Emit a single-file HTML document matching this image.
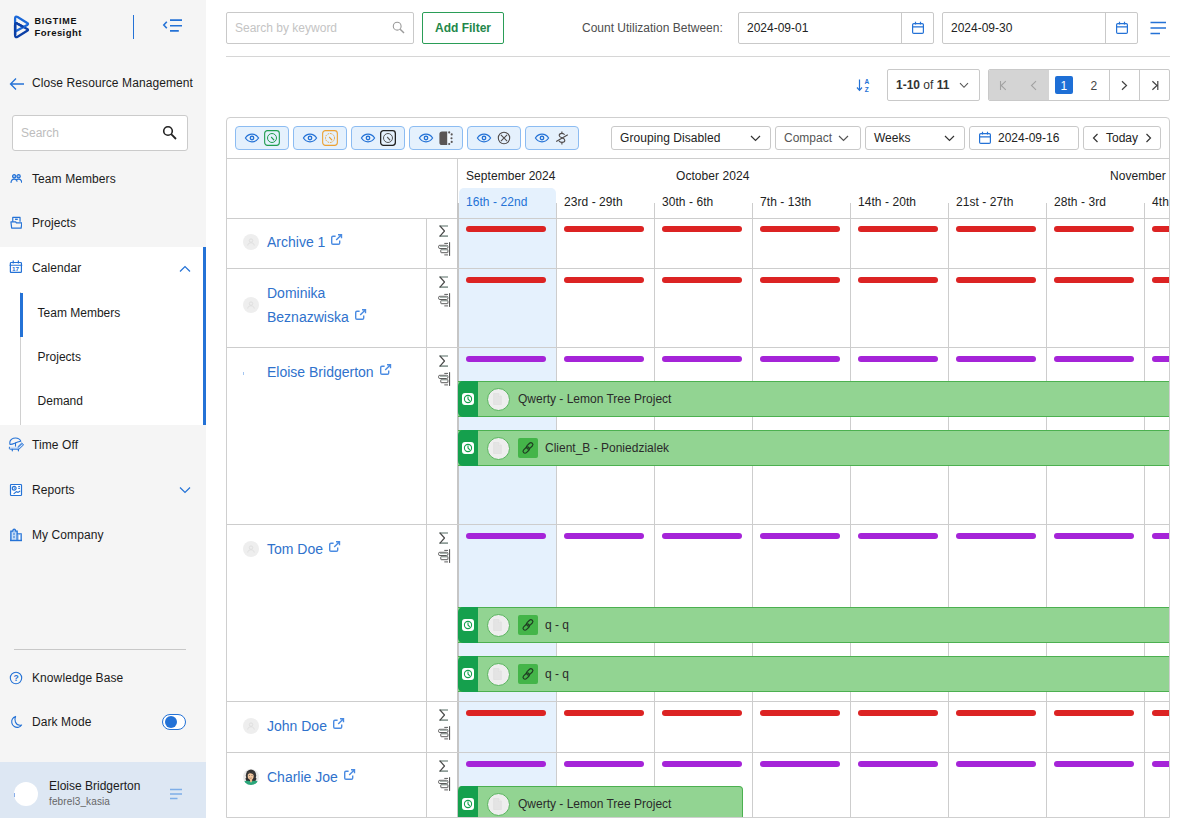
<!DOCTYPE html>
<html>
<head>
<meta charset="utf-8">
<style>
*{box-sizing:border-box;margin:0;padding:0}
html,body{width:1185px;height:818px;overflow:hidden;background:#fff;font-family:"Liberation Sans",sans-serif;font-size:12px;color:#212121}
.abs{position:absolute}
#side{position:absolute;left:0;top:0;width:206px;height:818px;background:#f5f5f5}
.nav{position:absolute;left:0;width:206px;height:44px}
.nav .t{position:absolute;left:32px;top:0;line-height:44px;font-size:12px;letter-spacing:.09px;color:#1b1b1b;white-space:nowrap}
.nav svg{position:absolute}
.sub .t{left:37.6px;letter-spacing:0}
#main{position:absolute;left:206px;top:0;width:979px;height:818px;background:#fff}
.inp{position:absolute;border:1px solid #c9c9c9;border-radius:2px;background:#fff;height:32px}
.txt{position:absolute;white-space:nowrap;line-height:14px}
/* scheduler */
#sch{position:absolute;left:226px;top:117px;width:944px;height:701px;border:1px solid #cfcfcf;border-radius:4px 4px 0 0;background:#fff;overflow:hidden}
.vl{position:absolute;width:1px;background:#cdcdcd}
.hl{position:absolute;height:1px;background:#cdcdcd}
.bar{position:absolute;height:6px;border-radius:3px;width:80px}
.red{background:#dc2323}
.pur{background:#a524d8}
.task{position:absolute;height:36px;background:#92d492;border:1px solid #4cb050;border-left:none;border-right:none}
.task .strip{position:absolute;left:0;top:-1px;width:20px;height:36px;background:#15a04d;border-radius:5px 0 0 5px}
.task .circ{position:absolute;left:28.5px;top:5.5px;width:23px;height:23px;border-radius:50%;background:#eeeeee;border:1.6px solid #58b45d}
.task .lbl{position:absolute;top:0;line-height:35px;font-size:12px;color:#2a2a2a;white-space:nowrap}
.tg{position:absolute;top:8px;width:54px;height:24px;border:1px solid #8cbcf2;border-radius:4px;background:#e5f1fd}
.dd{position:absolute;top:8px;height:24px;border:1px solid #c9c9c9;border-radius:3px;background:#fff}
.dd .t{position:absolute;left:8px;top:0;line-height:22px;font-size:12px;white-space:nowrap;color:#222}
.nm{position:absolute;left:40px;font-size:14px;color:#2f72cc;white-space:nowrap;line-height:24px}
.av{position:absolute;left:16px;width:16px;height:16px;border-radius:50%;background:#eeeeee}
.wk{position:absolute;top:35px;line-height:14px;font-size:12px;color:#222;white-space:nowrap}
.mo{position:absolute;top:9px;line-height:14px;font-size:12px;letter-spacing:.06px;color:#222;white-space:nowrap}
</style>
</head>
<body>
<div id="side">
  <!-- logo -->
  <svg class="abs" style="left:13px;top:14px" width="18" height="26" viewBox="0 0 18 26"><g fill="none" stroke-width="2.3" stroke-linejoin="round" stroke-linecap="round">
<path d="M2.1 11.2Q2.1 8.2 4.6 9.7L14.2 15Q15.8 15.9 14.2 16.8L4.6 22.7Q2.1 24 2.1 21.2Z" stroke="#0b3fa6"/>
<path d="M2.1 16.5V4.5Q2.1 1.6 4.6 3.1L14.2 9Q15.8 9.9 14.2 10.9L3.2 17" stroke="#1b68d8"/>
<path d="M2.1 21V11.2Q2.1 8.2 4.6 9.7L9.6 12.5" stroke="#0b3fa6"/>
</g></svg>
  <div class="txt" style="left:34.5px;top:15px;font-size:9px;font-weight:bold;letter-spacing:.77px;color:#111;line-height:12px">BIGTIME</div>
  <div class="txt" style="left:34.5px;top:27px;font-size:9.5px;font-weight:bold;letter-spacing:.45px;color:#111;line-height:12px">Foresight</div>
  <div class="abs" style="left:133px;top:15px;width:1px;height:24px;background:#2472d6"></div>
  <svg class="abs" style="left:162px;top:17px" width="21" height="16" viewBox="0 0 21 16"><path d="M8 3.1H20M8 8.75H20M8 13.9H16.8" stroke="#2472d6" stroke-width="1.6" fill="none"/><path d="M4.8 4.8L1.8 8L4.8 11.2" stroke="#2472d6" stroke-width="1.6" fill="none"/></svg>

  <!-- close resource mgmt -->
  <svg class="abs" style="left:9px;top:77px" width="16" height="14" viewBox="0 0 16 14"><path d="M15 7H2M7 1.5L1.5 7L7 12.5" stroke="#2472d6" stroke-width="1.3" fill="none"/></svg>
  <div class="txt" style="left:32px;top:76px;font-size:12px;letter-spacing:.09px;color:#1b1b1b">Close Resource Management</div>

  <!-- search -->
  <div class="abs" style="left:12px;top:115px;width:176px;height:36px;border:1px solid #cbcbcb;border-radius:3px;background:#fff"></div>
  <div class="txt" style="left:21px;top:126px;font-size:12px;color:#bdbdbd">Search</div>
  <svg class="abs" style="left:162px;top:125px" width="16" height="16" viewBox="0 0 16 16"><circle cx="6" cy="6" r="4.3" stroke="#222" stroke-width="1.6" fill="none"/><path d="M9.2 9.2L14 14" stroke="#222" stroke-width="1.8"/></svg>

  <div class="nav" style="top:157px"><svg style="left:9.6px;top:16.4px" width="12.8" height="11" viewBox="0 0 14 12"><g fill="none" stroke="#2472d6" stroke-width="1.3"><circle cx="4.6" cy="3.6" r="1.8" fill="#a9c8f0"/><circle cx="9.4" cy="3.6" r="1.8" fill="#a9c8f0"/><path d="M1 10.8C1.4 7.6 3 6.6 4.6 6.6S7.4 7.4 7.9 9.4M6.4 7.4C7.3 6.8 8.3 6.6 9.4 6.6C11 6.6 12.6 7.6 13 10.8"/></g></svg><div class="t">Team Members</div></div>
  <div class="nav" style="top:201px"><svg style="left:9.6px;top:14.8px" width="12.8" height="13.7" viewBox="0 0 14 15"><g fill="none" stroke="#2472d6" stroke-width="1.3" stroke-linejoin="round"><path d="M3 6.2V1.6H11V6.2"/><path d="M5.5 3.6H8.5" stroke-width="1.5"/><path d="M1 6.4H6.2L7 7.6H13L12.2 13.2H1.8Z"/></g></svg><div class="t">Projects</div></div>
  <div class="abs" style="left:0;top:247px;width:206px;height:178px;background:#fff;border-right:3px solid #2472d6"></div>
  <div class="nav" style="top:246px"><svg style="left:9.4px;top:14.4px" width="13.8" height="14" viewBox="0 0 15 15"><g fill="none" stroke="#2472d6" stroke-width="1.3"><rect x="1.5" y="2.6" width="12" height="10.8" rx="0.8" fill="#fff"/><path d="M0.6 5.6H14.4M4.6 0.4V3.8M10.2 0.4V3.8"/></g><text x="3.2" y="11.8" font-family="Liberation Sans" font-size="6.8" font-weight="bold" fill="#2472d6">17</text></svg><div class="t">Calendar</div><svg style="left:179px;top:19px" width="12" height="8" viewBox="0 0 12 8"><path d="M1 6.5L6 1.5L11 6.5" fill="none" stroke="#2472d6" stroke-width="1.2"/></svg></div>
  <div class="abs" style="left:20px;top:292px;width:1px;height:133px;background:#d0d0d0"></div>
  <div class="abs" style="left:20px;top:293px;width:3px;height:44px;background:#2472d6"></div>
  <div class="nav sub" style="top:291px"><div class="t">Team Members</div></div>
  <div class="nav sub" style="top:335px"><div class="t">Projects</div></div>
  <div class="nav sub" style="top:379px"><div class="t">Demand</div></div>
  <div class="nav" style="top:423px"><svg style="left:8px;top:14px" width="17" height="15" viewBox="0 0 17 15"><g fill="none" stroke="#2472d6" stroke-width="1.1" stroke-linecap="round" stroke-linejoin="round"><path d="M2 7.4C1.2 4.4 3 1.8 5.4 1.2C8.8 0.6 11.8 1.8 12.8 4.2C10.8 4.4 8.8 5 6.6 6.2C5 7 3.4 7.5 2 7.4Z"/><path d="M7.5 6V9.2"/><path d="M1.5 9.8H9.9L13.6 6.1L15.6 7.8L11 12.2H1.5Z" fill="#cfe1f8" stroke="none"/><path d="M1.4 10.2V11.6Q1.4 12.2 2.2 12.2H11L15.6 7.8L13.6 6.1L9.9 9.8" stroke-width="1"/><path d="M10.4 10.2L14 6.8" stroke-width="0.8"/><path d="M4.3 12.4V13.8M10.4 12.4V13.8" stroke-width="1.2"/></g></svg><div class="t">Time Off</div></div>
  <div class="nav" style="top:468px"><svg style="left:9px;top:15px" width="14" height="14" viewBox="0 0 14 14"><g fill="none" stroke="#2472d6" stroke-width="1.2"><rect x="1.5" y="1.5" width="11" height="11" rx="0.8" fill="#fff"/><circle cx="5.2" cy="5.2" r="1.9"/><path d="M5.2 4.2V5.4L6 6" stroke-width="0.8"/><path d="M9.2 3.6H11M9.2 5.4H11" stroke-width="1"/><path d="M5 10.6L7.4 8.6L9 9.4L10.8 8.2" stroke-linecap="round"/></g></svg><div class="t">Reports</div><svg style="left:179px;top:18.3px" width="12" height="8" viewBox="0 0 12 8"><path d="M1 1.5L6 6.5L11 1.5" fill="none" stroke="#2472d6" stroke-width="1.2"/></svg></div>
  <div class="nav" style="top:513px"><svg style="left:9px;top:14px" width="14" height="15" viewBox="0 0 14 15"><g fill="none" stroke="#2472d6" stroke-width="1.2"><path d="M1.8 13.4V4.2H3.6Q4 2.2 5.2 2.2T6.8 4.2H8.2V13.4" fill="#9fc4f0"/><path d="M3.9 5.5V13M6.1 5.5V13" stroke="#e8f1fc" stroke-width="1"/><path d="M8.2 6.8H12.2V13.4" /><path d="M10.3 8.5V12.8" stroke="#fff" stroke-width="1.2"/><path d="M9.2 7.4V13M11.5 7.4V13" stroke="#8fb9ee" stroke-width="0.9"/><path d="M4.4 7H5.6M4.4 10H5.6" stroke-width="1.3"/><path d="M1 13.5H13" stroke-width="1.4"/></g></svg><div class="t">My Company</div></div>

  <div class="abs" style="left:14px;top:649px;width:172px;height:1px;background:#c8c8c8"></div>
  <div class="nav" style="top:656px"><svg style="left:9px;top:15px" width="14" height="14" viewBox="0 0 14 14"><circle cx="7" cy="7" r="5.7" fill="none" stroke="#2472d6" stroke-width="1.1"/><text x="4.4" y="10" font-family="Liberation Sans" font-size="8.5" font-weight="bold" fill="#2472d6">?</text></svg><div class="t">Knowledge Base</div></div>
  <div class="nav" style="top:700px"><svg style="left:10px;top:15px" width="13" height="14" viewBox="0 0 13 14"><path d="M5.6 1.4C2.8 2.4 1.4 5 1.8 7.8C2.4 11 5.6 13 8.6 12.2C10 11.8 11 11 11.6 10C9 10.6 6.4 9.4 5.4 7C4.6 5 4.8 3 5.6 1.4Z" fill="none" stroke="#2472d6" stroke-width="1.1" stroke-linejoin="round"/></svg><div class="t">Dark Mode</div></div>
  <div class="abs" style="left:162px;top:714px;width:24px;height:16px;border:1px solid #2472d6;border-radius:8px;background:#fff"><div class="abs" style="left:2px;top:1px;width:12px;height:12px;border-radius:50%;background:#2472d6"></div></div>

  <div class="abs" style="left:0;top:762px;width:206px;height:56px;background:#dde7f3"></div>
  <div class="abs" style="left:14px;top:782px;width:24px;height:24px;border-radius:50%;background:#fff"></div><div class="abs" style="left:14px;top:793px;width:1px;height:4px;background:#6d9be6;opacity:.8"></div>
  <div class="txt" style="left:49px;top:779px;font-size:12px;color:#1b1b1b">Eloise Bridgerton</div>
  <div class="txt" style="left:49px;top:796px;font-size:10px;letter-spacing:.12px;color:#666;line-height:12px">febrel3_kasia</div>
  <svg class="abs" style="left:169px;top:788px" width="14" height="12" viewBox="0 0 14 12"><path d="M1 1.5H13M1 6H13M1 10.5H8.5" stroke="#7eaee8" stroke-width="1.7" fill="none"/></svg>
</div>

<div id="main"></div>

<!-- TOPBAR -->
<div class="inp" style="left:226px;top:12px;width:188px"></div>
<div class="txt" style="left:235px;top:21px;font-size:12px;color:#c4c4c4">Search by keyword</div>
<svg class="abs" style="left:391.5px;top:21px" width="13" height="13" viewBox="0 0 13 13"><circle cx="5.2" cy="5.2" r="3.9" stroke="#9a9a9a" stroke-width="1.1" fill="none"/><path d="M8.2 8.2L12 12" stroke="#9a9a9a" stroke-width="1.4"/></svg>
<div class="abs" style="left:422px;top:12px;width:82px;height:32px;border:1px solid #2a9d57;border-radius:2px;background:#fff"></div>
<div class="txt" style="left:435px;top:21px;font-size:12px;font-weight:bold;color:#23874a">Add Filter</div>
<div class="txt" style="left:582px;top:21px;font-size:12px;color:#4d4d4d">Count Utilization Between:</div>
<div class="inp" style="left:738px;top:12px;width:196px"></div>
<div class="abs" style="left:901px;top:13px;width:1px;height:30px;background:#c9c9c9"></div>
<div class="txt" style="left:747px;top:21px;font-size:12px;color:#222">2024-09-01</div>
<svg class="abs cal" style="left:911px;top:21px" width="14" height="14" viewBox="0 0 14 14"><rect x="1.6" y="2.6" width="10.8" height="9.8" rx="1.2" stroke="#2472d6" stroke-width="1.2" fill="none"/><path d="M1.6 5.8H12.4M4.5 0.8V3.4M9.5 0.8V3.4" stroke="#2472d6" stroke-width="1.2"/></svg>
<div class="inp" style="left:942px;top:12px;width:196px"></div>
<div class="abs" style="left:1105px;top:13px;width:1px;height:30px;background:#c9c9c9"></div>
<div class="txt" style="left:951px;top:21px;font-size:12px;color:#222">2024-09-30</div>
<svg class="abs cal" style="left:1115px;top:21px" width="14" height="14" viewBox="0 0 14 14"><rect x="1.6" y="2.6" width="10.8" height="9.8" rx="1.2" stroke="#2472d6" stroke-width="1.2" fill="none"/><path d="M1.6 5.8H12.4M4.5 0.8V3.4M9.5 0.8V3.4" stroke="#2472d6" stroke-width="1.2"/></svg>
<svg class="abs" style="left:1150px;top:21px" width="17" height="14" viewBox="0 0 17 14"><path d="M0.5 1.5H16M0.5 7H16M0.5 12.5H10" stroke="#2472d6" stroke-width="1.3" fill="none"/></svg>
<div class="abs" style="left:226px;top:56px;width:944px;height:1px;background:#d6d6d6"></div>

<!-- PAGINATION ROW -->
<svg class="abs" style="left:856px;top:78px" width="15" height="15" viewBox="0 0 15 15"><path d="M3.5 1.5V12M1 9.5L3.5 12.3L6 9.5" stroke="#2472d6" stroke-width="1.2" fill="none"/><text x="8.6" y="6.2" font-family="Liberation Sans" font-size="6.5" font-weight="bold" fill="#2472d6">A</text><text x="8.8" y="13.6" font-family="Liberation Sans" font-size="6.5" font-weight="bold" fill="#2472d6">Z</text></svg>
<div class="inp" style="left:887px;top:69px;width:93px;height:32px"></div>
<div class="txt" style="left:896px;top:78px;font-size:12px;color:#333"><b>1-10</b> of <b>11</b></div>
<svg class="abs" style="left:959px;top:82px" width="10" height="7" viewBox="0 0 10 7"><path d="M1 1.2L5 5.3L9 1.2" stroke="#555" stroke-width="1.1" fill="none"/></svg>
<div class="abs" style="left:988px;top:69px;width:182px;height:32px;border:1px solid #c9c9c9;border-radius:2px;background:#fff;overflow:hidden">
  <div class="abs" style="left:0;top:0;width:60px;height:30px;background:#d4d4d4"></div>
  <div class="abs" style="left:120px;top:0;width:1px;height:30px;background:#c9c9c9"></div>
  <div class="abs" style="left:150px;top:0;width:1px;height:30px;background:#c9c9c9"></div>
  <div class="abs" style="left:66px;top:6px;width:18px;height:18px;border-radius:2px;background:#1e6fd6"></div>
  <div class="txt" style="left:71.5px;top:9px;font-size:12px;color:#fff">1</div>
  <div class="txt" style="left:101.5px;top:9px;font-size:12px;color:#444">2</div>
  <svg class="abs" style="left:10px;top:10px" width="9" height="11" viewBox="0 0 9 11"><path d="M1.5 1V10M6.8 1.2L2.2 5.5L6.8 9.8" stroke="#a2a2a2" stroke-width="1.1" fill="none"/></svg>
  <svg class="abs" style="left:41px;top:10px" width="8" height="11" viewBox="0 0 8 11"><path d="M6 1.2L1.5 5.5L6 9.8" stroke="#a2a2a2" stroke-width="1.1" fill="none"/></svg>
  <svg class="abs" style="left:132px;top:10px" width="8" height="11" viewBox="0 0 8 11"><path d="M1 1.2L5.5 5.5L1 9.8" stroke="#444" stroke-width="1.2" fill="none"/></svg>
  <svg class="abs" style="left:162px;top:10px" width="9" height="11" viewBox="0 0 9 11"><path d="M6.8 1V10M1.4 1.2L6 5.5L1.4 9.8" stroke="#444" stroke-width="1.2" fill="none"/></svg>
</div>
<!--SCHED_START-->
<div id="sch">
<div class="tg" style="left:8px">
<svg class="abs" style="left:8px;top:6px" width="16" height="10" viewBox="0 0 16 10"><path d="M1.4 5C3.2 2.2 5.5 1.2 8 1.2S12.8 2.2 14.6 5C12.8 7.8 10.5 8.8 8 8.8S3.2 7.8 1.4 5Z" stroke="#2472d6" stroke-width="1.2" fill="none"/><circle cx="8" cy="5" r="1.7" stroke="#2472d6" stroke-width="1.4" fill="#fff"/></svg>
<svg class="abs" style="left:28px;top:3px" width="16" height="16" viewBox="0 0 16 16"><rect x="0.65" y="0.65" width="14.7" height="14.7" rx="2.8" stroke="#1f9d4f" stroke-width="1.1" fill="none"/><circle cx="8" cy="8" r="4.5" stroke="#1f9d4f" stroke-width="1" fill="none"/><path d="M7.5 7.3L9.8 9.9" stroke="#1f9d4f" stroke-width="1.25" stroke-linecap="round" fill="none"/></svg>
</div>
<div class="tg" style="left:66px">
<svg class="abs" style="left:8px;top:6px" width="16" height="10" viewBox="0 0 16 10"><path d="M1.4 5C3.2 2.2 5.5 1.2 8 1.2S12.8 2.2 14.6 5C12.8 7.8 10.5 8.8 8 8.8S3.2 7.8 1.4 5Z" stroke="#2472d6" stroke-width="1.2" fill="none"/><circle cx="8" cy="5" r="1.7" stroke="#2472d6" stroke-width="1.4" fill="#fff"/></svg>
<svg class="abs" style="left:28px;top:3px" width="16" height="16" viewBox="0 0 16 16"><rect x="0.65" y="0.65" width="14.7" height="14.7" rx="2.8" stroke="#eba133" stroke-width="1.1" fill="none"/><circle cx="8" cy="8" r="4.5" stroke="#eba133" stroke-width="1" fill="none" stroke-dasharray="1.6 1"/><path d="M7.5 7.3L9.8 9.9" stroke="#eba133" stroke-width="1.25" stroke-linecap="round" fill="none"/></svg>
</div>
<div class="tg" style="left:124px">
<svg class="abs" style="left:8px;top:6px" width="16" height="10" viewBox="0 0 16 10"><path d="M1.4 5C3.2 2.2 5.5 1.2 8 1.2S12.8 2.2 14.6 5C12.8 7.8 10.5 8.8 8 8.8S3.2 7.8 1.4 5Z" stroke="#2472d6" stroke-width="1.2" fill="none"/><circle cx="8" cy="5" r="1.7" stroke="#2472d6" stroke-width="1.4" fill="#fff"/></svg>
<svg class="abs" style="left:28px;top:3px" width="16" height="16" viewBox="0 0 16 16"><rect x="0.65" y="0.65" width="14.7" height="14.7" rx="2.8" stroke="#222" stroke-width="1.3" fill="none"/><circle cx="8" cy="8" r="4.5" stroke="#555" stroke-width="1" fill="none"/><path d="M7.5 7.3L9.8 9.9" stroke="#555" stroke-width="1.25" stroke-linecap="round" fill="none"/></svg>
</div>
<div class="tg" style="left:182px">
<svg class="abs" style="left:8px;top:6px" width="16" height="10" viewBox="0 0 16 10"><path d="M1.4 5C3.2 2.2 5.5 1.2 8 1.2S12.8 2.2 14.6 5C12.8 7.8 10.5 8.8 8 8.8S3.2 7.8 1.4 5Z" stroke="#2472d6" stroke-width="1.2" fill="none"/><circle cx="8" cy="5" r="1.7" stroke="#2472d6" stroke-width="1.4" fill="#fff"/></svg>
<svg class="abs" style="left:29px;top:4px" width="15" height="15" viewBox="0 0 15 15"><rect x="7" y="2.6" width="4.4" height="8.8" fill="#f6faff"/><path d="M3 0.4H8.2V14H3Q0.4 14 0.4 11.4V3Q0.4 0.4 3 0.4Z" fill="#5a5555"/><g fill="#5a5555"><circle cx="10.2" cy="1.4" r="1.05"/><circle cx="12.7" cy="3.4" r="1.05"/><circle cx="12.5" cy="7.2" r="1.05"/><circle cx="12.7" cy="10.9" r="1.05"/><circle cx="10.2" cy="13" r="1.05"/></g></svg>
</div>
<div class="tg" style="left:240px">
<svg class="abs" style="left:8px;top:6px" width="16" height="10" viewBox="0 0 16 10"><path d="M1.4 5C3.2 2.2 5.5 1.2 8 1.2S12.8 2.2 14.6 5C12.8 7.8 10.5 8.8 8 8.8S3.2 7.8 1.4 5Z" stroke="#2472d6" stroke-width="1.2" fill="none"/><circle cx="8" cy="5" r="1.7" stroke="#2472d6" stroke-width="1.4" fill="#fff"/></svg>
<svg class="abs" style="left:29px;top:4px" width="14" height="14" viewBox="0 0 14 14"><circle cx="7" cy="7" r="5.7" stroke="#4f4a4a" stroke-width="1.1" fill="none"/><path d="M3.9 3.9L10.1 10.1M10.1 3.9L3.9 10.1" stroke="#4f4a4a" stroke-width="1.1"/></svg>
</div>
<div class="tg" style="left:298px">
<svg class="abs" style="left:8px;top:6px" width="16" height="10" viewBox="0 0 16 10"><path d="M1.4 5C3.2 2.2 5.5 1.2 8 1.2S12.8 2.2 14.6 5C12.8 7.8 10.5 8.8 8 8.8S3.2 7.8 1.4 5Z" stroke="#2472d6" stroke-width="1.2" fill="none"/><circle cx="8" cy="5" r="1.7" stroke="#2472d6" stroke-width="1.4" fill="#fff"/></svg>
<svg class="abs" style="left:29px;top:2px" width="14" height="18" viewBox="0 0 14 18"><path d="M9.6 5.8C9 4.8 8 4.4 6.8 4.4C5.2 4.4 4.2 5.3 4.2 6.5C4.2 9.2 9.8 8.2 9.8 11.2C9.8 12.6 8.6 13.4 7 13.4C5.6 13.4 4.6 12.9 4 11.9" stroke="#4f4a4a" stroke-width="1.1" fill="none"/><path d="M6.9 2.4V4.4M6.9 13.4V15.4M1.2 12.4L12.8 5.8" stroke="#4f4a4a" stroke-width="1.1"/></svg>
</div>
<div class="dd" style="left:384px;width:160px"><div class="t" style="letter-spacing:.07px">Grouping Disabled</div><svg class="abs" style="right:9px;top:8px" width="11" height="7" viewBox="0 0 11 7"><path d="M1 1L5.5 5.5L10 1" stroke="#333" stroke-width="1.2" fill="none"/></svg></div>
<div class="dd" style="left:548px;width:86px"><div class="t" style="color:#555">Compact</div><svg class="abs" style="right:11px;top:8px" width="11" height="7" viewBox="0 0 11 7"><path d="M1 1L5.5 5.5L10 1" stroke="#555" stroke-width="1.2" fill="none"/></svg></div>
<div class="dd" style="left:638px;width:100px"><div class="t">Weeks</div><svg class="abs" style="right:9px;top:8px" width="11" height="7" viewBox="0 0 11 7"><path d="M1 1L5.5 5.5L10 1" stroke="#333" stroke-width="1.2" fill="none"/></svg></div>
<div class="dd" style="left:742px;width:110px"><svg class="abs" style="left:8px;top:4px" width="14" height="14" viewBox="0 0 14 14"><rect x="1.6" y="2.6" width="10.8" height="9.8" rx="1.2" stroke="#2472d6" stroke-width="1.2" fill="none"/><path d="M1.6 5.8H12.4M4.5 0.8V3.4M9.5 0.8V3.4" stroke="#2472d6" stroke-width="1.2"/></svg><div class="t" style="left:28px">2024-09-16</div></div>
<div class="dd" style="left:856px;width:78px"><svg class="abs" style="left:8px;top:6px" width="7" height="10" viewBox="0 0 7 10"><path d="M5.5 1L1.5 5L5.5 9" stroke="#333" stroke-width="1.2" fill="none"/></svg><div class="t" style="left:22px">Today</div><svg class="abs" style="right:8px;top:6px" width="7" height="10" viewBox="0 0 7 10"><path d="M1.5 1L5.5 5L1.5 9" stroke="#333" stroke-width="1.2" fill="none"/></svg></div>
<div class="hl" style="left:0;top:40px;width:944px"></div>
<div class="abs" style="left:232px;top:70px;width:97px;height:700px;background:#e5f1fd;border-radius:5px 5px 0 0"></div>
<div class="mo" style="left:239px;top:51px">September 2024</div>
<div class="mo" style="left:449px;top:51px">October 2024</div>
<div class="mo" style="left:883px;top:51px">November 2024</div>
<div class="wk" style="left:239px;top:77px;color:#2472d6;letter-spacing:.06px">16th - 22nd</div>
<div class="wk" style="left:337px;top:77px;color:#222;letter-spacing:.06px">23rd - 29th</div>
<div class="wk" style="left:435px;top:77px;color:#222;letter-spacing:.06px">30th - 6th</div>
<div class="wk" style="left:533px;top:77px;color:#222;letter-spacing:.06px">7th - 13th</div>
<div class="wk" style="left:631px;top:77px;color:#222;letter-spacing:.06px">14th - 20th</div>
<div class="wk" style="left:729px;top:77px;color:#222;letter-spacing:.06px">21st - 27th</div>
<div class="wk" style="left:827px;top:77px;color:#222;letter-spacing:.06px">28th - 3rd</div>
<div class="wk" style="left:925px;top:77px;color:#222;letter-spacing:.06px">4th - 10th</div>
<div class="hl" style="left:0;top:100px;width:944px"></div>
<div class="vl" style="left:199px;top:100px;height:700px"></div>
<div class="vl" style="left:230px;top:40px;height:46px;width:1px;background:#cfcfcf"></div>
<div class="vl" style="left:230px;top:85px;height:700px;width:2px;background:#c6c6c6"></div>
<div class="vl" style="left:329px;top:85px;height:700px"></div>
<div class="vl" style="left:427px;top:85px;height:700px"></div>
<div class="vl" style="left:525px;top:85px;height:700px"></div>
<div class="vl" style="left:623px;top:85px;height:700px"></div>
<div class="vl" style="left:721px;top:85px;height:700px"></div>
<div class="vl" style="left:819px;top:85px;height:700px"></div>
<div class="vl" style="left:917px;top:85px;height:700px"></div>
<div class="hl" style="left:0;top:150px;width:944px"></div>
<div class="nm" style="top:112px">Archive 1<svg style="display:inline-block;vertical-align:0.6px;margin-left:5px" width="13" height="13" viewBox="0 0 13 13"><path d="M5.6 3.2H3Q1.7 3.2 1.7 4.5V10Q1.7 11.3 3 11.3H8.4Q9.7 11.3 9.7 10V7.6" stroke="#4a8be2" stroke-width="1.4" fill="none"/><path d="M6.2 7L11 2.2M8 1.7H11.5V5.2" stroke="#4a8be2" stroke-width="1.4" fill="none"/></svg></div>
<div class="av" style="top:116px"></div>
<svg class="abs" style="left:20px;top:120px" width="8" height="8" viewBox="0 0 8 8"><circle cx="4" cy="2.6" r="1.7" fill="none" stroke="#dcdcdc" stroke-width="0.8"/><path d="M0.8 7.5C1 5.2 2.5 4.8 4 4.8S7 5.2 7.2 7.5" fill="none" stroke="#dcdcdc" stroke-width="0.8"/></svg>
<svg class="abs" style="left:212px;top:107px" width="10" height="13" viewBox="0 0 10 13"><path d="M0.5 1H9M0.5 11.1H9" stroke="#8f9d98" stroke-width="1.7"/><path d="M1 1L5.5 6L1 11.1" stroke="#4a4a4a" stroke-width="1.15" stroke-linecap="round" stroke-linejoin="round" fill="none"/></svg>
<svg class="abs" style="left:211px;top:124px" width="13" height="15" viewBox="0 0 13 15"><path d="M11.6 0.2V13.9" stroke="#444" stroke-width="1"/><path d="M6.3 1.4H10M6.3 12.9H10" stroke="#4a4a4a" stroke-width="0.9"/><rect x="0.6" y="3.3" width="9.3" height="3.2" rx="1.2" fill="#fff" stroke="#4a4a4a" stroke-width="0.9"/><path d="M2 4.4H9.4" stroke="#aab6b1" stroke-width="1.2"/><rect x="2.8" y="7.5" width="7.1" height="3.2" rx="0.6" fill="#fff" stroke="#4a4a4a" stroke-width="0.9"/><path d="M3.4 7.9H9.4" stroke="#aab6b1" stroke-width="1.2"/></svg>
<div class="bar red" style="left:239px;top:108px"></div>
<div class="bar red" style="left:337px;top:108px"></div>
<div class="bar red" style="left:435px;top:108px"></div>
<div class="bar red" style="left:533px;top:108px"></div>
<div class="bar red" style="left:631px;top:108px"></div>
<div class="bar red" style="left:729px;top:108px"></div>
<div class="bar red" style="left:827px;top:108px"></div>
<div class="bar red" style="left:925px;top:108px"></div>
<div class="hl" style="left:0;top:229px;width:944px"></div>
<div class="nm" style="top:163px">Dominika<br>Beznazwiska<svg style="display:inline-block;vertical-align:0.6px;margin-left:5px" width="13" height="13" viewBox="0 0 13 13"><path d="M5.6 3.2H3Q1.7 3.2 1.7 4.5V10Q1.7 11.3 3 11.3H8.4Q9.7 11.3 9.7 10V7.6" stroke="#4a8be2" stroke-width="1.4" fill="none"/><path d="M6.2 7L11 2.2M8 1.7H11.5V5.2" stroke="#4a8be2" stroke-width="1.4" fill="none"/></svg></div>
<div class="av" style="top:179px"></div>
<svg class="abs" style="left:20px;top:183px" width="8" height="8" viewBox="0 0 8 8"><circle cx="4" cy="2.6" r="1.7" fill="none" stroke="#dcdcdc" stroke-width="0.8"/><path d="M0.8 7.5C1 5.2 2.5 4.8 4 4.8S7 5.2 7.2 7.5" fill="none" stroke="#dcdcdc" stroke-width="0.8"/></svg>
<svg class="abs" style="left:212px;top:158px" width="10" height="13" viewBox="0 0 10 13"><path d="M0.5 1H9M0.5 11.1H9" stroke="#8f9d98" stroke-width="1.7"/><path d="M1 1L5.5 6L1 11.1" stroke="#4a4a4a" stroke-width="1.15" stroke-linecap="round" stroke-linejoin="round" fill="none"/></svg>
<svg class="abs" style="left:211px;top:175px" width="13" height="15" viewBox="0 0 13 15"><path d="M11.6 0.2V13.9" stroke="#444" stroke-width="1"/><path d="M6.3 1.4H10M6.3 12.9H10" stroke="#4a4a4a" stroke-width="0.9"/><rect x="0.6" y="3.3" width="9.3" height="3.2" rx="1.2" fill="#fff" stroke="#4a4a4a" stroke-width="0.9"/><path d="M2 4.4H9.4" stroke="#aab6b1" stroke-width="1.2"/><rect x="2.8" y="7.5" width="7.1" height="3.2" rx="0.6" fill="#fff" stroke="#4a4a4a" stroke-width="0.9"/><path d="M3.4 7.9H9.4" stroke="#aab6b1" stroke-width="1.2"/></svg>
<div class="bar red" style="left:239px;top:159px"></div>
<div class="bar red" style="left:337px;top:159px"></div>
<div class="bar red" style="left:435px;top:159px"></div>
<div class="bar red" style="left:533px;top:159px"></div>
<div class="bar red" style="left:631px;top:159px"></div>
<div class="bar red" style="left:729px;top:159px"></div>
<div class="bar red" style="left:827px;top:159px"></div>
<div class="bar red" style="left:925px;top:159px"></div>
<div class="hl" style="left:0;top:406px;width:944px"></div>
<div class="nm" style="top:242px">Eloise Bridgerton<svg style="display:inline-block;vertical-align:0.6px;margin-left:5px" width="13" height="13" viewBox="0 0 13 13"><path d="M5.6 3.2H3Q1.7 3.2 1.7 4.5V10Q1.7 11.3 3 11.3H8.4Q9.7 11.3 9.7 10V7.6" stroke="#4a8be2" stroke-width="1.4" fill="none"/><path d="M6.2 7L11 2.2M8 1.7H11.5V5.2" stroke="#4a8be2" stroke-width="1.4" fill="none"/></svg></div>
<svg class="abs" style="left:212px;top:237px" width="10" height="13" viewBox="0 0 10 13"><path d="M0.5 1H9M0.5 11.1H9" stroke="#8f9d98" stroke-width="1.7"/><path d="M1 1L5.5 6L1 11.1" stroke="#4a4a4a" stroke-width="1.15" stroke-linecap="round" stroke-linejoin="round" fill="none"/></svg>
<svg class="abs" style="left:211px;top:254px" width="13" height="15" viewBox="0 0 13 15"><path d="M11.6 0.2V13.9" stroke="#444" stroke-width="1"/><path d="M6.3 1.4H10M6.3 12.9H10" stroke="#4a4a4a" stroke-width="0.9"/><rect x="0.6" y="3.3" width="9.3" height="3.2" rx="1.2" fill="#fff" stroke="#4a4a4a" stroke-width="0.9"/><path d="M2 4.4H9.4" stroke="#aab6b1" stroke-width="1.2"/><rect x="2.8" y="7.5" width="7.1" height="3.2" rx="0.6" fill="#fff" stroke="#4a4a4a" stroke-width="0.9"/><path d="M3.4 7.9H9.4" stroke="#aab6b1" stroke-width="1.2"/></svg>
<div class="bar pur" style="left:239px;top:238px"></div>
<div class="bar pur" style="left:337px;top:238px"></div>
<div class="bar pur" style="left:435px;top:238px"></div>
<div class="bar pur" style="left:533px;top:238px"></div>
<div class="bar pur" style="left:631px;top:238px"></div>
<div class="bar pur" style="left:729px;top:238px"></div>
<div class="bar pur" style="left:827px;top:238px"></div>
<div class="bar pur" style="left:925px;top:238px"></div>
<div class="hl" style="left:0;top:583px;width:944px"></div>
<div class="nm" style="top:419px">Tom Doe<svg style="display:inline-block;vertical-align:0.6px;margin-left:5px" width="13" height="13" viewBox="0 0 13 13"><path d="M5.6 3.2H3Q1.7 3.2 1.7 4.5V10Q1.7 11.3 3 11.3H8.4Q9.7 11.3 9.7 10V7.6" stroke="#4a8be2" stroke-width="1.4" fill="none"/><path d="M6.2 7L11 2.2M8 1.7H11.5V5.2" stroke="#4a8be2" stroke-width="1.4" fill="none"/></svg></div>
<div class="av" style="top:423px"></div>
<svg class="abs" style="left:20px;top:427px" width="8" height="8" viewBox="0 0 8 8"><circle cx="4" cy="2.6" r="1.7" fill="none" stroke="#dcdcdc" stroke-width="0.8"/><path d="M0.8 7.5C1 5.2 2.5 4.8 4 4.8S7 5.2 7.2 7.5" fill="none" stroke="#dcdcdc" stroke-width="0.8"/></svg>
<svg class="abs" style="left:212px;top:414px" width="10" height="13" viewBox="0 0 10 13"><path d="M0.5 1H9M0.5 11.1H9" stroke="#8f9d98" stroke-width="1.7"/><path d="M1 1L5.5 6L1 11.1" stroke="#4a4a4a" stroke-width="1.15" stroke-linecap="round" stroke-linejoin="round" fill="none"/></svg>
<svg class="abs" style="left:211px;top:431px" width="13" height="15" viewBox="0 0 13 15"><path d="M11.6 0.2V13.9" stroke="#444" stroke-width="1"/><path d="M6.3 1.4H10M6.3 12.9H10" stroke="#4a4a4a" stroke-width="0.9"/><rect x="0.6" y="3.3" width="9.3" height="3.2" rx="1.2" fill="#fff" stroke="#4a4a4a" stroke-width="0.9"/><path d="M2 4.4H9.4" stroke="#aab6b1" stroke-width="1.2"/><rect x="2.8" y="7.5" width="7.1" height="3.2" rx="0.6" fill="#fff" stroke="#4a4a4a" stroke-width="0.9"/><path d="M3.4 7.9H9.4" stroke="#aab6b1" stroke-width="1.2"/></svg>
<div class="bar pur" style="left:239px;top:415px"></div>
<div class="bar pur" style="left:337px;top:415px"></div>
<div class="bar pur" style="left:435px;top:415px"></div>
<div class="bar pur" style="left:533px;top:415px"></div>
<div class="bar pur" style="left:631px;top:415px"></div>
<div class="bar pur" style="left:729px;top:415px"></div>
<div class="bar pur" style="left:827px;top:415px"></div>
<div class="bar pur" style="left:925px;top:415px"></div>
<div class="hl" style="left:0;top:634px;width:944px"></div>
<div class="nm" style="top:596px">John Doe<svg style="display:inline-block;vertical-align:0.6px;margin-left:5px" width="13" height="13" viewBox="0 0 13 13"><path d="M5.6 3.2H3Q1.7 3.2 1.7 4.5V10Q1.7 11.3 3 11.3H8.4Q9.7 11.3 9.7 10V7.6" stroke="#4a8be2" stroke-width="1.4" fill="none"/><path d="M6.2 7L11 2.2M8 1.7H11.5V5.2" stroke="#4a8be2" stroke-width="1.4" fill="none"/></svg></div>
<div class="av" style="top:600px"></div>
<svg class="abs" style="left:20px;top:604px" width="8" height="8" viewBox="0 0 8 8"><circle cx="4" cy="2.6" r="1.7" fill="none" stroke="#dcdcdc" stroke-width="0.8"/><path d="M0.8 7.5C1 5.2 2.5 4.8 4 4.8S7 5.2 7.2 7.5" fill="none" stroke="#dcdcdc" stroke-width="0.8"/></svg>
<svg class="abs" style="left:212px;top:591px" width="10" height="13" viewBox="0 0 10 13"><path d="M0.5 1H9M0.5 11.1H9" stroke="#8f9d98" stroke-width="1.7"/><path d="M1 1L5.5 6L1 11.1" stroke="#4a4a4a" stroke-width="1.15" stroke-linecap="round" stroke-linejoin="round" fill="none"/></svg>
<svg class="abs" style="left:211px;top:608px" width="13" height="15" viewBox="0 0 13 15"><path d="M11.6 0.2V13.9" stroke="#444" stroke-width="1"/><path d="M6.3 1.4H10M6.3 12.9H10" stroke="#4a4a4a" stroke-width="0.9"/><rect x="0.6" y="3.3" width="9.3" height="3.2" rx="1.2" fill="#fff" stroke="#4a4a4a" stroke-width="0.9"/><path d="M2 4.4H9.4" stroke="#aab6b1" stroke-width="1.2"/><rect x="2.8" y="7.5" width="7.1" height="3.2" rx="0.6" fill="#fff" stroke="#4a4a4a" stroke-width="0.9"/><path d="M3.4 7.9H9.4" stroke="#aab6b1" stroke-width="1.2"/></svg>
<div class="bar red" style="left:239px;top:592px"></div>
<div class="bar red" style="left:337px;top:592px"></div>
<div class="bar red" style="left:435px;top:592px"></div>
<div class="bar red" style="left:533px;top:592px"></div>
<div class="bar red" style="left:631px;top:592px"></div>
<div class="bar red" style="left:729px;top:592px"></div>
<div class="bar red" style="left:827px;top:592px"></div>
<div class="bar red" style="left:925px;top:592px"></div>
<div class="hl" style="left:0;top:712px;width:944px"></div>
<div class="nm" style="top:647px">Charlie Joe<svg style="display:inline-block;vertical-align:0.6px;margin-left:5px" width="13" height="13" viewBox="0 0 13 13"><path d="M5.6 3.2H3Q1.7 3.2 1.7 4.5V10Q1.7 11.3 3 11.3H8.4Q9.7 11.3 9.7 10V7.6" stroke="#4a8be2" stroke-width="1.4" fill="none"/><path d="M6.2 7L11 2.2M8 1.7H11.5V5.2" stroke="#4a8be2" stroke-width="1.4" fill="none"/></svg></div>
<svg class="abs" style="left:16px;top:651px" width="16" height="16" viewBox="0 0 16 16"><defs><clipPath id="cp"><circle cx="8" cy="8" r="8"/></clipPath></defs><g clip-path="url(#cp)"><rect width="16" height="16" fill="#e9e9e9"/><ellipse cx="8" cy="6.6" rx="5.2" ry="6.2" fill="#343434"/><path d="M2.6 9C2.6 12 4 12.6 5 12.6H11C12.4 12.6 13.4 11 13.4 9Z" fill="#2e2e2e"/><rect x="7" y="9.6" width="2.2" height="4" fill="#f0b88a"/><ellipse cx="7.7" cy="6.8" rx="3" ry="3.9" fill="#f2c79f"/><path d="M4.6 6C5 3.6 6.4 2.8 8 2.8S11 4 11 6.4C10 5 8.6 4.2 7.4 4.2S5.2 4.8 4.6 6Z" fill="#343434"/><path d="M0 16V13.2C2 11.6 4.6 11.6 6.6 12L8 13.8L9.4 12C11.6 11.6 14 11.6 16 13.2V16Z" fill="#2aa67a"/><circle cx="6.4" cy="6.4" r="0.5" fill="#555"/><circle cx="9" cy="6.4" r="0.5" fill="#555"/><path d="M6.4 8.9Q7.6 9.6 8.8 8.9" stroke="#7a4a3a" stroke-width="0.5" fill="none"/></g></svg>
<svg class="abs" style="left:212px;top:642px" width="10" height="13" viewBox="0 0 10 13"><path d="M0.5 1H9M0.5 11.1H9" stroke="#8f9d98" stroke-width="1.7"/><path d="M1 1L5.5 6L1 11.1" stroke="#4a4a4a" stroke-width="1.15" stroke-linecap="round" stroke-linejoin="round" fill="none"/></svg>
<svg class="abs" style="left:211px;top:659px" width="13" height="15" viewBox="0 0 13 15"><path d="M11.6 0.2V13.9" stroke="#444" stroke-width="1"/><path d="M6.3 1.4H10M6.3 12.9H10" stroke="#4a4a4a" stroke-width="0.9"/><rect x="0.6" y="3.3" width="9.3" height="3.2" rx="1.2" fill="#fff" stroke="#4a4a4a" stroke-width="0.9"/><path d="M2 4.4H9.4" stroke="#aab6b1" stroke-width="1.2"/><rect x="2.8" y="7.5" width="7.1" height="3.2" rx="0.6" fill="#fff" stroke="#4a4a4a" stroke-width="0.9"/><path d="M3.4 7.9H9.4" stroke="#aab6b1" stroke-width="1.2"/></svg>
<div class="bar pur" style="left:239px;top:643px"></div>
<div class="bar pur" style="left:337px;top:643px"></div>
<div class="bar pur" style="left:435px;top:643px"></div>
<div class="bar pur" style="left:533px;top:643px"></div>
<div class="bar pur" style="left:631px;top:643px"></div>
<div class="bar pur" style="left:729px;top:643px"></div>
<div class="bar pur" style="left:827px;top:643px"></div>
<div class="bar pur" style="left:925px;top:643px"></div>
<div class="abs" style="left:16px;top:254px;width:1px;height:3px;background:#8db8ee;opacity:.8"></div>
<div class="task" style="left:231px;top:263px;width:713px;"><div class="strip"><svg class="abs" style="left:4px;top:12px" width="12" height="12" viewBox="0 0 12 12"><rect x="0" y="0" width="12" height="12" rx="3" fill="#fff"/><circle cx="6" cy="6" r="3.6" stroke="#15a04d" stroke-width="1.1" fill="none"/><path d="M6 3.6V6L7.8 7.8" stroke="#15a04d" stroke-width="1.1" fill="none"/></svg></div><div class="circ"><svg class="abs" style="left:5.5px;top:4.5px" width="9" height="12" viewBox="0 0 9 12"><path d="M0.6 0.5H5.6L8.4 3.3V11.5H0.6Z" fill="#e4e4e4" stroke="#dddddd" stroke-width="0.6"/><path d="M5.6 0.5V3.3H8.4" fill="#ececec" stroke="#dddddd" stroke-width="0.5"/></svg></div><div class="lbl" style="left:60px">Qwerty - Lemon Tree Project</div></div>
<div class="task" style="left:231px;top:312px;width:713px;"><div class="strip"><svg class="abs" style="left:4px;top:12px" width="12" height="12" viewBox="0 0 12 12"><rect x="0" y="0" width="12" height="12" rx="3" fill="#fff"/><circle cx="6" cy="6" r="3.6" stroke="#15a04d" stroke-width="1.1" fill="none"/><path d="M6 3.6V6L7.8 7.8" stroke="#15a04d" stroke-width="1.1" fill="none"/></svg></div><div class="circ"><svg class="abs" style="left:5.5px;top:4.5px" width="9" height="12" viewBox="0 0 9 12"><path d="M0.6 0.5H5.6L8.4 3.3V11.5H0.6Z" fill="#e4e4e4" stroke="#dddddd" stroke-width="0.6"/><path d="M5.6 0.5V3.3H8.4" fill="#ececec" stroke="#dddddd" stroke-width="0.5"/></svg></div><div class="abs" style="left:60px;top:7px;width:20px;height:20px;border-radius:2px;background:#44b549"><svg class="abs" style="left:3px;top:3px" width="14" height="14" viewBox="0 0 14 14"><g transform="rotate(-45 7 7)" fill="none" stroke="#1f3d22" stroke-width="1.15"><rect x="0.6" y="5.3" width="7.4" height="3.9" rx="1.95"/><rect x="6" y="4.7" width="7.4" height="3.9" rx="1.95"/></g></svg></div><div class="lbl" style="left:87px">Client_B - Poniedzialek</div></div>
<div class="task" style="left:231px;top:489px;width:713px;"><div class="strip"><svg class="abs" style="left:4px;top:12px" width="12" height="12" viewBox="0 0 12 12"><rect x="0" y="0" width="12" height="12" rx="3" fill="#fff"/><circle cx="6" cy="6" r="3.6" stroke="#15a04d" stroke-width="1.1" fill="none"/><path d="M6 3.6V6L7.8 7.8" stroke="#15a04d" stroke-width="1.1" fill="none"/></svg></div><div class="circ"><svg class="abs" style="left:5.5px;top:4.5px" width="9" height="12" viewBox="0 0 9 12"><path d="M0.6 0.5H5.6L8.4 3.3V11.5H0.6Z" fill="#e4e4e4" stroke="#dddddd" stroke-width="0.6"/><path d="M5.6 0.5V3.3H8.4" fill="#ececec" stroke="#dddddd" stroke-width="0.5"/></svg></div><div class="abs" style="left:60px;top:7px;width:20px;height:20px;border-radius:2px;background:#44b549"><svg class="abs" style="left:3px;top:3px" width="14" height="14" viewBox="0 0 14 14"><g transform="rotate(-45 7 7)" fill="none" stroke="#1f3d22" stroke-width="1.15"><rect x="0.6" y="5.3" width="7.4" height="3.9" rx="1.95"/><rect x="6" y="4.7" width="7.4" height="3.9" rx="1.95"/></g></svg></div><div class="lbl" style="left:87px">q - q</div></div>
<div class="task" style="left:231px;top:538px;width:713px;"><div class="strip"><svg class="abs" style="left:4px;top:12px" width="12" height="12" viewBox="0 0 12 12"><rect x="0" y="0" width="12" height="12" rx="3" fill="#fff"/><circle cx="6" cy="6" r="3.6" stroke="#15a04d" stroke-width="1.1" fill="none"/><path d="M6 3.6V6L7.8 7.8" stroke="#15a04d" stroke-width="1.1" fill="none"/></svg></div><div class="circ"><svg class="abs" style="left:5.5px;top:4.5px" width="9" height="12" viewBox="0 0 9 12"><path d="M0.6 0.5H5.6L8.4 3.3V11.5H0.6Z" fill="#e4e4e4" stroke="#dddddd" stroke-width="0.6"/><path d="M5.6 0.5V3.3H8.4" fill="#ececec" stroke="#dddddd" stroke-width="0.5"/></svg></div><div class="abs" style="left:60px;top:7px;width:20px;height:20px;border-radius:2px;background:#44b549"><svg class="abs" style="left:3px;top:3px" width="14" height="14" viewBox="0 0 14 14"><g transform="rotate(-45 7 7)" fill="none" stroke="#1f3d22" stroke-width="1.15"><rect x="0.6" y="5.3" width="7.4" height="3.9" rx="1.95"/><rect x="6" y="4.7" width="7.4" height="3.9" rx="1.95"/></g></svg></div><div class="lbl" style="left:87px">q - q</div></div>
<div class="task" style="left:231px;top:668px;width:285px;border-right:1px solid #4cb050;border-radius:4px 4px 0 0;"><div class="strip"><svg class="abs" style="left:4px;top:12px" width="12" height="12" viewBox="0 0 12 12"><rect x="0" y="0" width="12" height="12" rx="3" fill="#fff"/><circle cx="6" cy="6" r="3.6" stroke="#15a04d" stroke-width="1.1" fill="none"/><path d="M6 3.6V6L7.8 7.8" stroke="#15a04d" stroke-width="1.1" fill="none"/></svg></div><div class="circ"><svg class="abs" style="left:5.5px;top:4.5px" width="9" height="12" viewBox="0 0 9 12"><path d="M0.6 0.5H5.6L8.4 3.3V11.5H0.6Z" fill="#e4e4e4" stroke="#dddddd" stroke-width="0.6"/><path d="M5.6 0.5V3.3H8.4" fill="#ececec" stroke="#dddddd" stroke-width="0.5"/></svg></div><div class="lbl" style="left:60px">Qwerty - Lemon Tree Project</div></div>
</div>
<!--SCHED_END-->

</body>
</html>
